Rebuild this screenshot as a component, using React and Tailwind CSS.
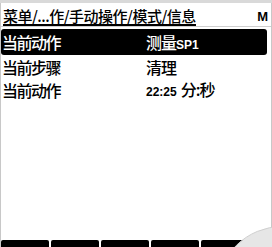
const cjk = { fontFamily: '"Noto Sans CJK SC", "Noto Sans", sans-serif' }
const latin = { fontFamily: '"Liberation Sans", Arial, sans-serif' }

function Row({ label, children, active }) {
  return (
    <div
      className={
        active
          ? 'flex h-[26px] w-[266px] items-center rounded-[3px] bg-black text-white'
          : 'flex h-[23px] items-center text-black'
      }
    >
      <div className="w-[145px] pl-[1px] text-[16px] font-medium leading-none tracking-[-1.5px]">{label}</div>
      <div className="flex items-baseline text-[16px] font-medium leading-none tracking-[-1px]">{children}</div>
    </div>
  )
}

export default function App() {
  return (
    <div className="relative flex h-[247px] w-[272px] flex-col overflow-hidden bg-white" style={cjk}>
      <div className="h-[3px] bg-[#d9d9d9]" />
      <div className="flex flex-1 flex-col border-l border-r border-[#c8c8c8]">
        <div className="flex h-[24px] items-end justify-between border-b border-[#cfcfcf] pl-[2px] pr-[3px]">
          <span className="border-b-2 border-black pb-[1px] text-[15px] font-medium leading-none tracking-[-0.5px]">
            菜单/...作/手动操作/模式/信息
          </span>
          <span className="pb-[3px] text-[13px] font-bold leading-none" style={latin}>M</span>
        </div>
        <div className="mt-[2px] flex flex-col">
          <Row label="当前动作" active>
            测量<span className="text-[12px] font-bold tracking-normal" style={latin}>SP1</span>
          </Row>
          <Row label="当前步骤">清理</Row>
          <Row label="当前动作">
            <span className="mr-[4px] text-[12px] font-bold tracking-normal" style={latin}>22:25</span>分:秒
          </Row>
        </div>
        <div className="mt-auto flex h-[7px] gap-[2px]">
          <div className="w-[48px] rounded-t-[2px] bg-black" />
          <div className="w-[48px] rounded-t-[2px] bg-black" />
          <div className="w-[48px] rounded-t-[2px] bg-black" />
          <div className="w-[48px] rounded-t-[2px] bg-black" />
          <div className="w-[48px] rounded-t-[2px] bg-black" />
        </div>
      </div>
      <div className="absolute left-[217px] top-[226px] h-[130px] w-[160px] rounded-full border border-[#cfcfcf] bg-[#e6e6e6]" />
    </div>
  )
}
